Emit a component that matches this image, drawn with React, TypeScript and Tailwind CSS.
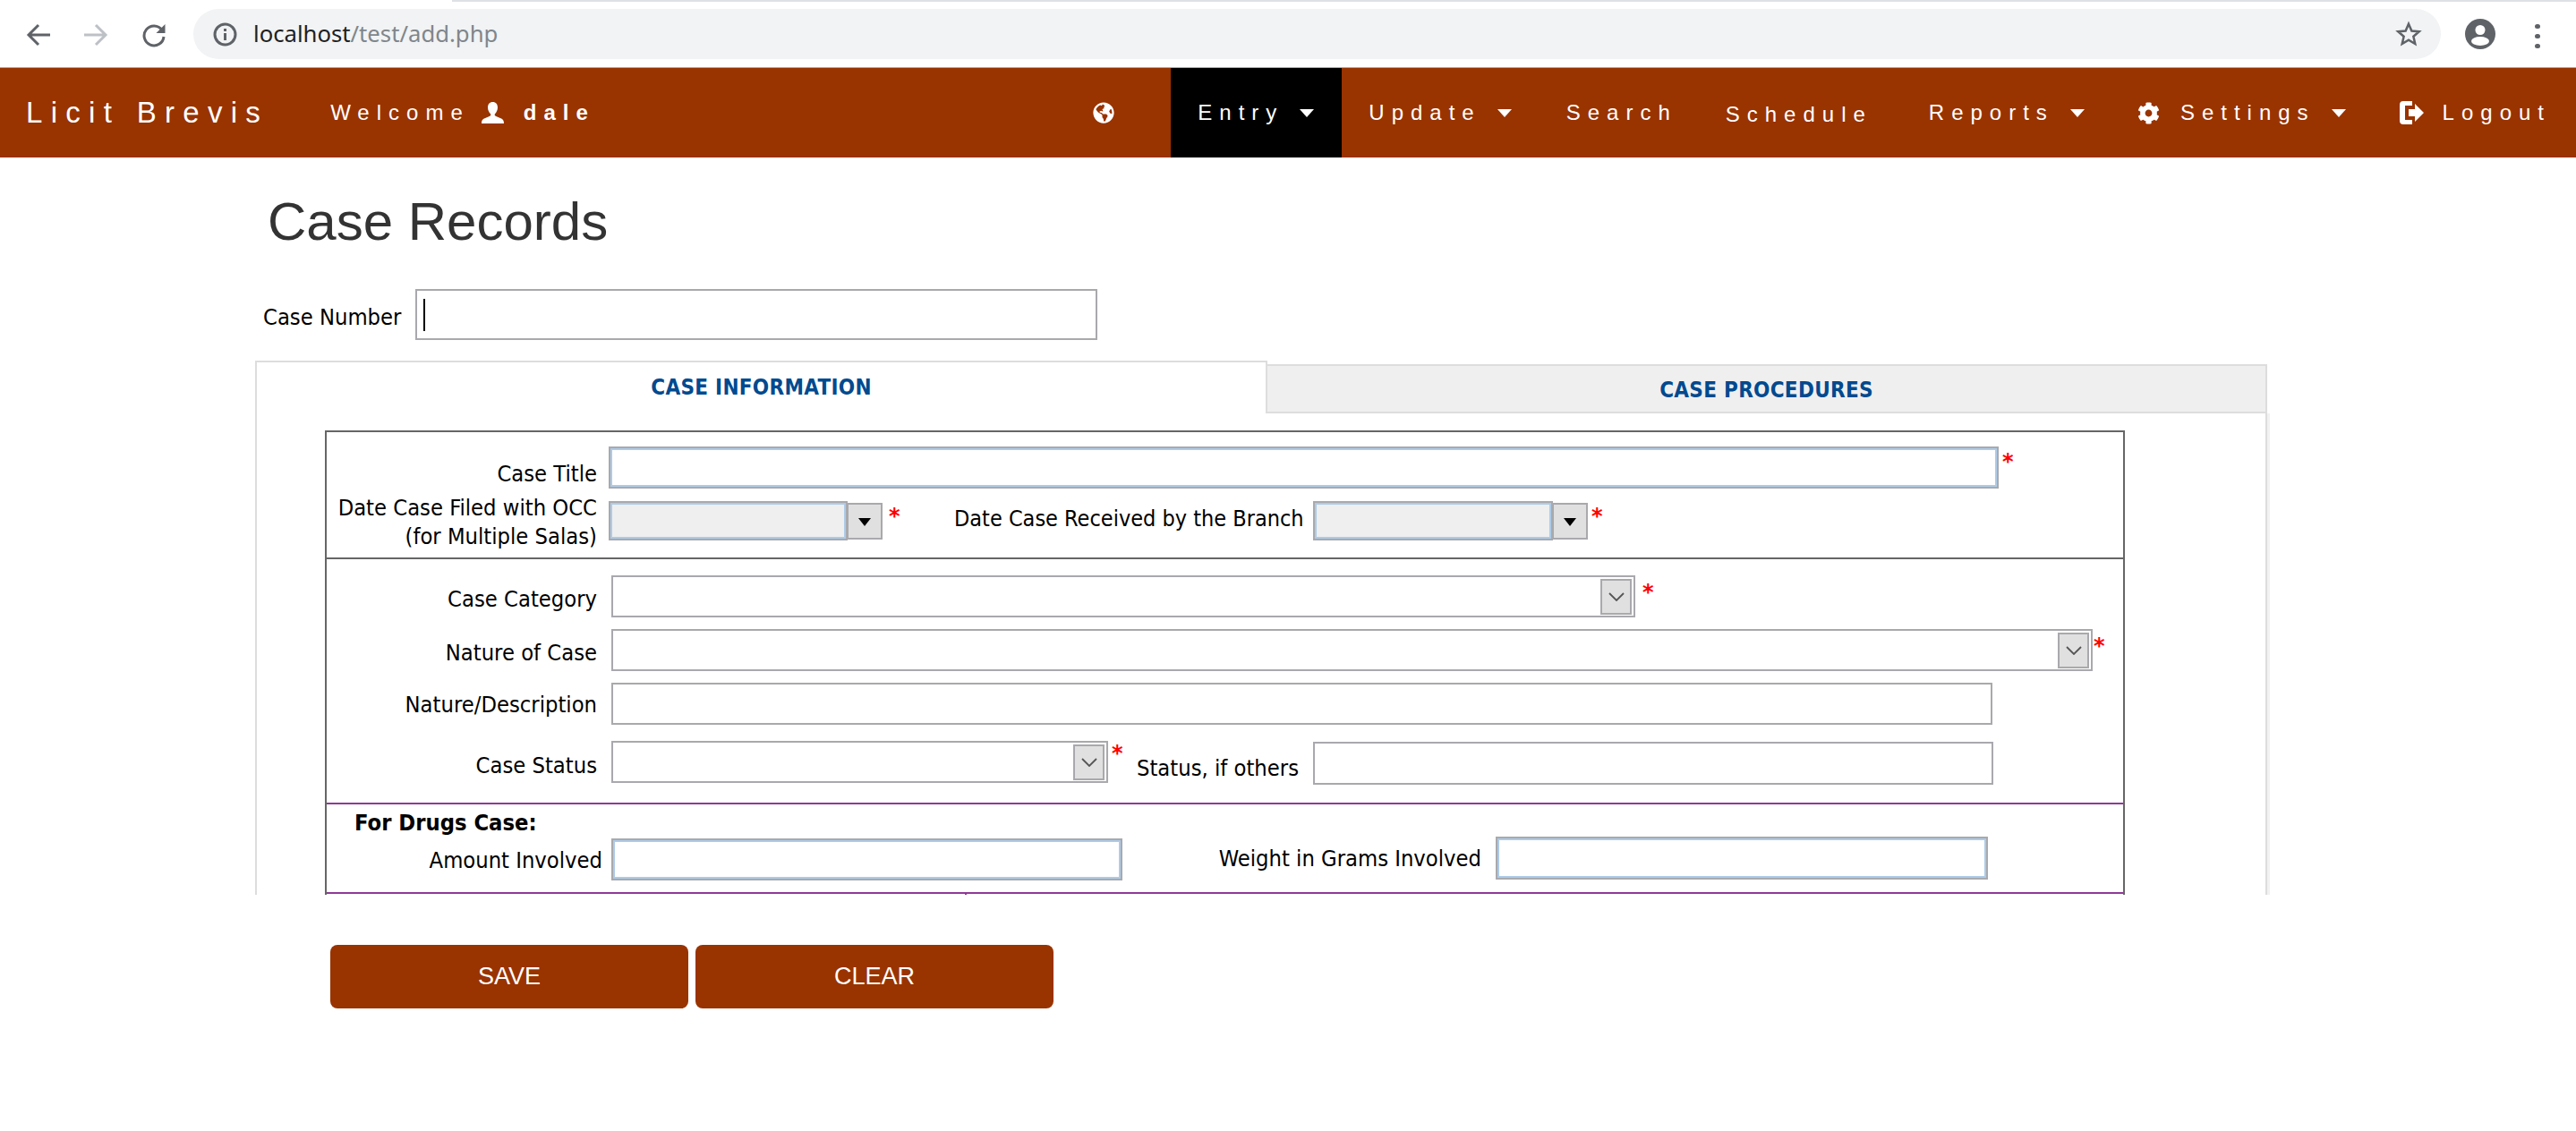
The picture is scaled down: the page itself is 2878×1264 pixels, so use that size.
import React from 'react';
import { FaCog, FaGlobeAmericas } from 'react-icons/fa';

const Caret = () => <span className="ml-[18px] h-0 w-0 border-x-[8px] border-t-[9px] border-x-transparent border-t-white" />;

const Star = ({ className }: { className: string }) => (
  <span className={`w-4 shrink-0 font-['DejaVu_Sans',sans-serif] text-[24px] leading-[24px] font-bold text-[#ff0000] ${className}`}>*</span>
);

const Chevron = () => (
  <svg width="18" height="10" viewBox="0 0 18 10" fill="none" stroke="#555" strokeWidth="1.8">
    <path d="M1 1l8 8 8-8" />
  </svg>
);

const SelectBox = ({ className }: { className: string }) => (
  <div className={`flex items-center justify-end border-2 border-[#a9a9ad] bg-white pr-[2px] ${className}`}>
    <div className="flex h-10 w-[35px] items-center justify-center border-2 border-[#a9a9ad] bg-[#e0e0e0]">
      <Chevron />
    </div>
  </div>
);

const TextBox = ({ className }: { className: string }) => (
  <input readOnly className={`block border-2 border-[#a9a9ad] bg-white outline-none ${className}`} />
);

const BlueBox = ({ className }: { className: string }) => (
  <input
    readOnly
    className={`block border-2 border-[#a9a9ad] shadow-[inset_0_0_0_2px_#adcbe8] outline-none ${className}`}
  />
);

const DateField = ({ className }: { className: string }) => (
  <div className="flex items-start">
    <BlueBox className={`h-[44px] bg-[#efefef] ${className}`} />
    <div className="mt-[2px] -ml-[1px] flex h-[41px] w-[40px] items-center justify-center border-2 border-[#a9a9ad] bg-[#e0e0e0]">
      <span className="mt-[2px] h-0 w-0 border-x-[7px] border-t-[9px] border-x-transparent border-t-black" />
    </div>
  </div>
);

const Label = ({ children, className }: { children: React.ReactNode; className: string }) => (
  <div className={`shrink-0 text-right leading-[32px] whitespace-nowrap ${className}`}>{children}</div>
);

const navItem = 'flex h-full items-center pl-[30px] text-[24px] tracking-[8px]';

export default function App() {
  return (
    <div className="min-h-[1264px] bg-white font-['Liberation_Sans',sans-serif] text-black">
      {/* browser chrome */}
      <div className="h-[76px] border-b border-[#aaaaaa] bg-white">
        <div className="ml-[505px] h-[2px] bg-[#dee1e6]" />
        <div className="flex h-[73px] items-start">
          <svg className="mt-[23px] ml-[29px]" width="28" height="28" viewBox="0 0 28 28" fill="none" stroke="#5f6368" strokeWidth="3">
            <path d="M27 14H3M14 3L3 14l11 11" />
          </svg>
          <svg className="mt-[23px] ml-[36px]" width="28" height="28" viewBox="0 0 28 28" fill="none" stroke="#bdc1c6" strokeWidth="3">
            <path d="M1 14h24M14 3l11 11-11 11" />
          </svg>
          <svg className="mt-[23px] ml-[37px]" width="28" height="28" viewBox="0 0 28 28" fill="none">
            <path d="M23 8.500A11 11 0 1 0 25 16" stroke="#5f6368" strokeWidth="3" />
            <path d="M26.500 2v10h-10z" fill="#5f6368" />
          </svg>
          <div className="mt-2 ml-[30px] flex h-14 w-[2511px] items-center rounded-full bg-[#f1f3f4] pl-[22px]">
            <svg width="27" height="27" viewBox="0 0 27 27" fill="none">
              <circle cx="13.5" cy="13.5" r="11.5" stroke="#5f6368" strokeWidth="3" />
              <path d="M13.5 12v8M13.5 7v3" stroke="#5f6368" strokeWidth="3" />
            </svg>
            <span className="ml-[18px] font-['Noto_Sans',sans-serif] text-[25.7px] text-[#202124]">
              localhost<span className="text-[#80868b]">/test/add.php</span>
            </span>
            <svg className="mr-[21px] ml-auto" width="30" height="30" viewBox="0 0 24 24" fill="none" stroke="#5f6368" strokeWidth="2">
              <path d="M12 3l2.700 6.200 6.700.6-5.100 4.400 1.500 6.600L12 17.300l-5.800 3.500 1.500-6.600-5.100-4.400 6.700-.6z" />
            </svg>
          </div>
          <svg className="mt-[19px] ml-[27px]" width="34" height="34" viewBox="0 0 34 34">
            <circle cx="17" cy="17" r="17" fill="#5f6368" />
            <circle cx="17" cy="12.5" r="5.5" fill="#ffffff" />
            <ellipse cx="17" cy="25" rx="10" ry="5" fill="#ffffff" />
          </svg>
          <div className="mt-[25px] ml-[44px] flex flex-col gap-[6px]">
            <span className="h-[5px] w-[6px] rounded-full bg-[#5f6368]" />
            <span className="h-[5px] w-[6px] rounded-full bg-[#5f6368]" />
            <span className="h-[5px] w-[6px] rounded-full bg-[#5f6368]" />
          </div>
        </div>
      </div>

      {/* navbar */}
      <div className="flex h-[100px] items-center bg-[#993300] text-white">
        <span className="ml-[29px] text-[33px] tracking-[9.3px] whitespace-nowrap">Licit Brevis</span>
        <div className="ml-[69px] flex items-center text-[24px] tracking-[8px]">
          <span>Welcome</span>
          <svg className="ml-[13px]" width="25" height="24" viewBox="0 0 25 24" fill="#ffffff">
            <path d="M12.500 0c3.600 0 5.500 2.600 5.500 6 0 3-1.300 5.600-2.800 7-.8.8-.8 2 .5 2.700l5.800 2.500C23.500 19 25 20 25 24H0c0-4 1.500-5 3.500-5.800l5.800-2.500c1.300-.7 1.300-1.900.5-2.700C8.300 11.600 7 9 7 6c0-3.400 1.900-6 5.500-6z" />
          </svg>
          <b className="ml-[22px]">dale</b>
        </div>
        <FaGlobeAmericas className="mr-[63px] ml-auto text-[24px]" />
        <div className="flex h-full items-center">
          <div className={`${navItem} bg-black pr-[31px]`}>
            Entry
            <Caret />
          </div>
          <div className={`${navItem} pr-[31px]`}>
            Update
            <Caret />
          </div>
          <div className={`${navItem} pr-6`}>Search</div>
          <div className={`${navItem} pt-1 pr-[33px]`}>Schedule</div>
          <div className={`${navItem} pr-[29px]`}>
            Reports
            <Caret />
          </div>
          <div className={`${navItem} pr-[30px]`}>
            <FaCog className="mr-[23px] text-[25px]" />
            Settings
            <Caret />
          </div>
          <div className={`${navItem} pr-7`}>
            <svg className="mr-[21px]" width="27" height="28" viewBox="0 0 27 28" fill="#ffffff">
              <path d="M14 1H4a4 4 0 0 0-4 4v18a4 4 0 0 0 4 4h10v-5H6V6h8z" />
              <path d="M10 10h7V4l10 10-10 10v-6h-7z" />
            </svg>
            Logout
          </div>
        </div>
      </div>

      {/* page body */}
      <div className="pl-[285px] font-['DejaVu_Sans_Condensed','DejaVu_Sans',sans-serif] text-[25.3px]">
        <h2 className="mt-8 ml-[14px] h-[80px] font-['Liberation_Sans',sans-serif] text-[60px] leading-[80px] text-[#333333]">
          Case Records
        </h2>
        <div className="mt-[35px] flex items-center">
          <span className="ml-[9px] w-[170px] pt-[6px] leading-[32px]">Case Number</span>
          <div className="flex h-[57px] w-[762px] items-center border-2 border-[#a9a9ad] pl-[7px]">
            <span className="h-9 w-[2px] bg-black" />
          </div>
        </div>

        {/* tabs */}
        <div className="mt-[23px] flex w-[2248px] items-end">
          <div className="flex h-[59px] w-[1131px] justify-center border-x-2 border-t-2 border-[#dddddd] pt-[13px] text-[24px] leading-[30px] font-bold tracking-[0.3px] text-[#004a8f]">
            CASE INFORMATION
          </div>
          <div className="-ml-[2px] flex h-[55px] flex-1 justify-center border-2 border-[#dddddd] bg-[#efefef] pt-[12px] text-[24px] leading-[30px] font-bold tracking-[0.3px] text-[#004a8f]">
            CASE PROCEDURES
          </div>
        </div>

        {/* panel */}
        <div className="h-[538px] w-[2248px] overflow-hidden border-x-2 border-[#dddddd] shadow-[3px_0_0_#f2f2f2]">
          <div className="mt-[19px] ml-[76px] w-[2011px] border-x-2 border-[#666666]">
            <div className="h-[142px] border-t-2 border-[#666666] pt-4">
              <div className="flex items-start">
                <Label className="w-[302px] pt-[15px]">Case Title</Label>
                <BlueBox className="ml-[13px] h-[47px] w-[1553px] bg-white" />
                <Star className="mt-[5px] ml-1" />
              </div>
              <div className="mt-[14px] flex items-start">
                <Label className="-mt-2 w-[302px]">
                  Date Case Filed with OCC
                  <br />
                  (for Multiple Salas)
                </Label>
                <div className="ml-[13px]">
                  <DateField className="w-[267px]" />
                </div>
                <Star className="mt-[5px] ml-[7px]" />
                <Label className="ml-[57px] w-[382px] pt-1 text-[25px]">Date Case Received by the Branch</Label>
                <div className="ml-[19px]">
                  <DateField className="w-[268px]" />
                </div>
                <Star className="mt-[5px] ml-1" />
              </div>
            </div>

            <div className="h-[274px] border-t-2 border-[#666666] pt-[18px]">
              <div className="flex items-start">
                <Label className="w-[302px] pt-[11px]">Case Category</Label>
                <SelectBox className="ml-4 h-[47px] w-[1144px]" />
                <Star className="mt-[7px] ml-2" />
              </div>
              <div className="mt-[13px] flex items-start">
                <Label className="w-[302px] pt-[11px]">Nature of Case</Label>
                <SelectBox className="ml-4 h-[47px] w-[1655px]" />
                <Star className="mt-[7px] ml-px" />
              </div>
              <div className="mt-[13px] flex items-start">
                <Label className="w-[302px] pt-[9px]">Nature/Description</Label>
                <TextBox className="ml-4 h-[47px] w-[1543px]" />
              </div>
              <div className="mt-[18px] flex items-start">
                <Label className="w-[302px] pt-[12px]">Case Status</Label>
                <SelectBox className="ml-4 h-[47px] w-[555px]" />
                <Star className="mt-[2px] ml-1" />
                <Label className="ml-[11px] w-[182px] pt-[15px]">Status, if others</Label>
                <TextBox className="mt-px ml-[16px] h-[48px] w-[760px]" />
              </div>
            </div>

            <div className="h-[100px] border-t-2 border-[#8e3a96]">
              <div className="ml-[31px] h-9 pt-[5px] leading-[32px] font-bold">For Drugs Case:</div>
              <div className="flex items-start">
                <Label className="w-[308px] pt-[11px]">Amount Involved</Label>
                <BlueBox className="mt-[2px] ml-[10px] h-[47px] w-[571px] bg-white" />
                <Label className="w-[401px] pt-[9px]">Weight in Grams Involved</Label>
                <BlueBox className="ml-4 h-[48px] w-[550px] bg-white" />
              </div>
            </div>
            <div className="h-[3px] border-t-2 border-[#8e3a96]">
              <div className="ml-[713px] h-px w-[2px] bg-[#8e3a96]" />
            </div>
          </div>
        </div>

        {/* actions */}
        <div className="mt-14 ml-[84px] flex gap-2 font-['Liberation_Sans',sans-serif] text-[27px] text-white">
          <button className="h-[71px] w-[400px] rounded-lg bg-[#993300]">SAVE</button>
          <button className="h-[71px] w-[400px] rounded-lg bg-[#993300]">CLEAR</button>
        </div>
      </div>
    </div>
  );
}
